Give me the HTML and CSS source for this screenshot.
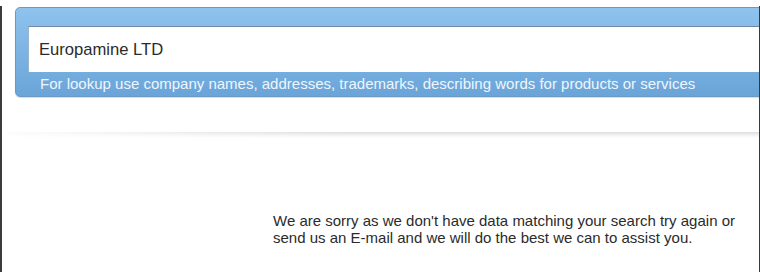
FILE: index.html
```html
<!DOCTYPE html>
<html>
<head>
    <title>Search</title>
    <link rel="stylesheet" href="styles.css">
</head>
<body>
    <div class="frame">
        <div class="content">
            <div class="search-box">
                <div class="search-input">Europamine LTD</div>
                <div class="search-hint">For lookup use company names, addresses, trademarks, describing words for products or services</div>
            </div>
            <div class="divider"></div>
            <div class="message">
                We are sorry as we don't have data matching your search try again or
                send us an E-mail and we will do the best we can to assist you.
            </div>
        </div>
    </div>
</body>
</html>
```

FILE: styles.css
```css
body {
    margin: 0;
    font-family: "Liberation Sans", Arial, sans-serif;
    background-color: #fff;
    overflow: hidden;
}
.frame {
    height: 272px;
    border-left: 2px solid #3c3c3c;
    box-sizing: border-box;
}
.content {
    margin-top: 6px;
    height: 266px;
    border-right: 1px solid #2e3a44;
    overflow: hidden;
    padding-top: 1px;
    box-sizing: border-box;
}
.search-box {
    margin-left: 13px;
    margin-right: -20px;
    padding: 18px 0 4px 12px;
    background: linear-gradient(to bottom, #8fc3ee 0%, #7fb5e4 45%, #6aa4d8 100%);
    border: 1px solid #6c98c4;
    border-radius: 5px;
    box-shadow: 0 1px 1px rgba(0, 0, 0, 0.15);
}
.search-input {
    height: 45px;
    line-height: 45px;
    padding-left: 10px;
    background: #fff;
    border-top: 1px solid #6f8aa6;
    border-left: 1px solid #9ab3cc;
    font-size: 16.6px;
    color: #2b2b2b;
}
.search-hint {
    margin-top: 3px;
    padding-left: 12px;
    font-size: 15px;
    line-height: 17px;
    color: #eef6fd;
}
.divider {
    margin-top: 35px;
    margin-left: 4px;
    height: 6px;
    background:
        linear-gradient(to right, rgba(255, 255, 255, 0.9), rgba(255, 255, 255, 0) 45%),
        linear-gradient(to bottom, #dedede, #f4f4f4 60%, #fff);
}
.message {
    margin-top: 74px;
    margin-left: 271px;
    width: 470px;
    font-size: 15px;
    line-height: 17px;
    color: #2b2b2b;
}
```
